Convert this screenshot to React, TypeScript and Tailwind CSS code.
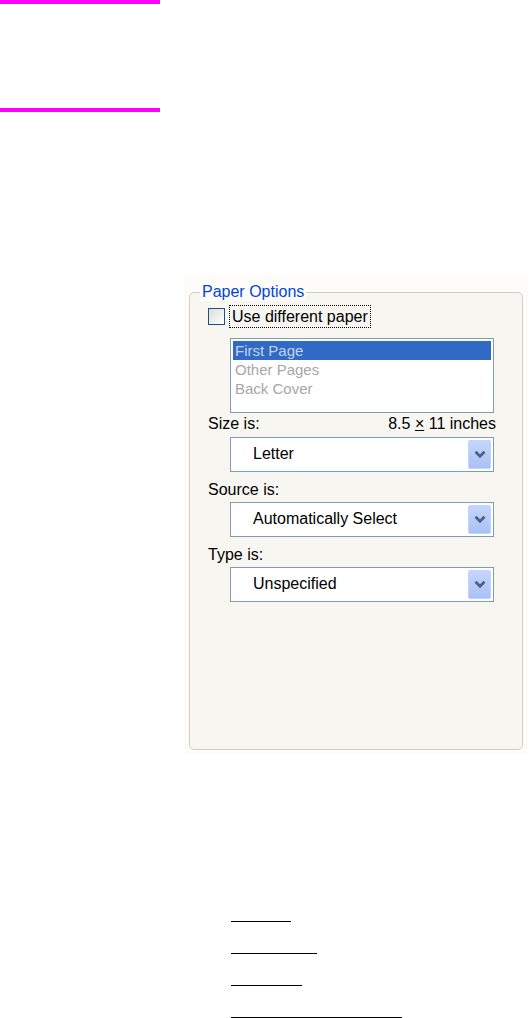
import React from 'react';

const Chevron = () => (
    <svg width="12" height="9" viewBox="0 0 12 9">
        <path d="M1.5 1.8 L6 6.3 L10.5 1.8" fill="none" stroke="#4d6185" strokeWidth="2.8" />
    </svg>
);

const Select = ({ value }: { value: string }) => (
    <div className="ml-[22px] w-[264px] h-[35px] flex items-center border border-[#7f9db9] bg-white">
        <span className="flex-1 pl-[22px] text-[16px] text-black">{value}</span>
        <div className="mr-[2px] w-[23px] h-[29px] flex items-center justify-center rounded-[2px] border border-[#c3d3fd] bg-gradient-to-b from-[#c6d6fb] to-[#a9c1f5]">
            <Chevron />
        </div>
    </div>
);

export default function App() {
    return (
        <div className="w-[532px] h-[1018px] bg-white flex flex-col" style={{ fontFamily: '"Liberation Sans", Arial, sans-serif' }}>
            <div className="w-[160px] h-[4px] bg-[#ff00ff]" />
            <div className="mt-[104px] w-[160px] h-[4px] bg-[#ff00ff]" />

            {/* Paper options panel */}
            <div className="mt-[163px] ml-[184px] w-[344px] h-[481px] bg-[#fdfcfa] pl-[5px] pt-[17px]">
                <div className="relative w-[334px] h-[458px] rounded-[5px] border border-[#d0d0bf] bg-[#f8f6f1] pl-[18px] pt-[12px] flex flex-col">
                    <span className="absolute left-[10px] top-[-10px] px-[2px] bg-[#fdfcfa] text-[16px] leading-[18px] text-[#0046d5]">Paper Options</span>

                    <div className="h-[23px] flex items-center">
                        <div className="w-[17px] h-[17px] border border-[#1c5180] bg-gradient-to-br from-[#dcdcd7] to-white" />
                        <span className="ml-[4px] px-[2px] text-[16px] leading-[21px] text-black border border-dotted border-black">Use different paper</span>
                    </div>

                    <div className="mt-[10px] ml-[22px] w-[264px] h-[75px] border border-[#7f9db9] bg-white p-[2px] text-[15px] leading-[19px] text-[#a7a6aa]">
                        <div className="bg-[#316ac5] text-[#c5d3ee] pl-[2px]">First Page</div>
                        <div className="pl-[2px]">Other Pages</div>
                        <div className="pl-[2px]">Back Cover</div>
                    </div>

                    <div className="mt-[1px] h-[20px] flex items-center justify-between pr-[26px] text-[16px] text-black">
                        <span>Size is:</span>
                        <span>8.5 <span className="underline">×</span> 11 inches</span>
                    </div>
                    <div className="mt-[3px]"><Select value="Letter" /></div>

                    <div className="mt-[8px] h-[20px] flex items-center text-[16px] text-black">Source is:</div>
                    <div className="mt-[2px]"><Select value="Automatically Select" /></div>

                    <div className="mt-[8px] h-[20px] flex items-center text-[16px] text-black">Type is:</div>
                    <div className="mt-[2px]"><Select value="Unspecified" /></div>
                </div>
            </div>

            {/* underline links */}
            <div className="mt-[167px] ml-[231px] flex flex-col gap-[30.5px]">
                <div className="w-[60px] h-[1.5px] bg-black" />
                <div className="w-[86px] h-[1.5px] bg-black" />
                <div className="w-[71px] h-[1.5px] bg-black" />
                <div className="w-[171px] h-[1.5px] bg-black" />
            </div>
        </div>
    );
}
